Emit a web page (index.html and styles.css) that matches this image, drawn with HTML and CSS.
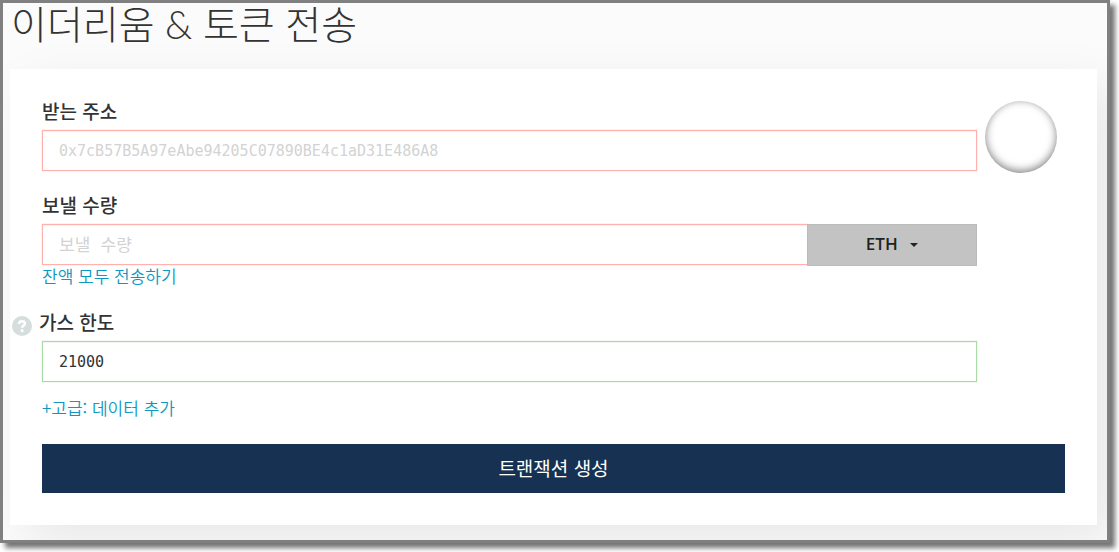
FILE: index.html
```html
<!DOCTYPE html>
<html lang="ko">
<head>
    <meta charset="UTF-8">
    <meta name="viewport" content="width=device-width, initial-scale=1.0">
    <title>이더리움 &amp; 토큰 전송</title>
    <link rel="stylesheet" href="styles.css">
</head>
<body>
<main class="page">
    <h1>이더리움 &amp; 토큰 전송</h1>
    <form class="block">
        <div class="send-grid">
            <div class="fields">
                <div class="form-group">
                    <label for="address">받는 주소</label>
                    <input type="text" id="address" class="form-control is-invalid" placeholder="0x7cB57B5A97eAbe94205C07890BE4c1aD31E486A8">
                </div>
                <div class="form-group">
                    <label for="amount">보낼 수량</label>
                    <div class="input-group">
                        <input type="text" id="amount" class="form-control is-invalid" placeholder="보낼 수량">
                        <button type="button" class="btn-unit">ETH <span class="caret"></span></button>
                    </div>
                    <a href="#" class="link">잔액 모두 전송하기</a>
                </div>
                <div class="form-group">
                    <div class="label-row">
                        <a href="#" class="help" aria-label="도움말">
                            <svg width="20" height="20" viewBox="0 0 20 20">
                                <circle cx="10" cy="10" r="10" fill="#d5dddd"/>
                                <path d="M7 7.9C7.1 6 8.3 5.2 10 5.2c1.7 0 2.9.9 2.9 2.4 0 2-2.8 1.9-2.8 4.2" fill="none" stroke="#fff" stroke-width="2.6"/>
                                <circle cx="10.1" cy="14.7" r="1.6" fill="#fff"/>
                            </svg>
                        </a>
                        <label for="gas">가스 한도</label>
                    </div>
                    <input type="text" id="gas" class="form-control is-valid" value="21000">
                </div>
                <a href="#" class="link">+고급: 데이터 추가</a>
            </div>
            <div class="identicon"></div>
        </div>
        <button type="submit" class="btn-primary">트랜잭션 생성</button>
    </form>
</main>
</body>
</html>
```
FILE: styles.css
```css
* {
    box-sizing: border-box;
}

body {
    margin: 0;
    padding: 0 9px 9px 0;
    background-color: #fff;
    font-family: "Noto Sans CJK KR", "Open Sans", sans-serif;
    font-size: 17px;
    line-height: 20px;
    color: #333;
}

.page {
    border: 3px solid #808080;
    background-color: #fbfbfb;
    box-shadow: 5px 5px 5px rgba(0, 0, 0, 0.55);
    padding: 0 10px 15px 7px;
    overflow: hidden;
}

h1 {
    margin: 0 0 24px 1px;
    font-family: Lato, "Noto Sans CJK KR", sans-serif;
    font-size: 39px;
    line-height: 42px;
    font-weight: 300;
}

.block {
    padding: 32px;
    background-color: #fff;
    box-shadow: 16px 16px 47px rgba(0, 0, 0, 0.08);
}

.send-grid {
    display: grid;
    grid-template-columns: 1fr 80px;
    gap: 8px;
}

.form-group {
    margin-bottom: 24px;
}

label {
    display: block;
    margin-bottom: 10px;
    font-size: 19px;
    line-height: 19px;
    font-weight: 500;
}

.form-control {
    display: block;
    width: 100%;
    height: 41px;
    padding: 0 16px;
    border: 1px solid #ccc;
    border-radius: 0;
    background-color: #fff;
    box-shadow: inset 0 1px 1px rgba(0, 0, 0, 0.08);
    font-family: "DejaVu Sans Mono", "Noto Sans CJK KR", monospace;
    font-size: 15px;
    color: #333;
}

.form-control::placeholder {
    color: #d3d3d3;
    opacity: 1;
}

.is-invalid {
    border-color: #ffb2ad;
    box-shadow: inset 0 1px 1px rgba(0, 0, 0, 0.05), 0 0 1px #ffb2ad;
}

.is-valid {
    border-color: #a9dba5;
    box-shadow: inset 0 1px 1px rgba(0, 0, 0, 0.05), 0 0 1px #a9dba5;
}

.input-group {
    display: flex;
}

#amount {
    border-right: 0;
    font-size: 17px;
}

.btn-unit {
    flex: 0 0 170px;
    height: 42px;
    padding-bottom: 4px;
    border: 1px solid #bbb;
    background-color: #c3c3c3;
    font-family: "Open Sans", sans-serif;
    font-size: 17px;
    font-weight: 600;
    color: #222;
}

.caret {
    display: inline-block;
    margin-left: 8px;
    border-top: 4px solid #222;
    border-left: 4px solid transparent;
    border-right: 4px solid transparent;
    vertical-align: middle;
}

.link {
    display: block;
    color: #0e97c0;
    text-decoration: none;
    font-weight: 350;
}

.label-row {
    display: flex;
    gap: 7px;
    margin-left: -30px;
    padding-top: 2px;
}

.help {
    height: 20px;
    padding-top: 4px;
}

.fields > .link {
    margin: -8px 0 26px;
}

.identicon {
    width: 72px;
    height: 72px;
    border-radius: 50%;
    box-shadow: inset 0 -2px 8px rgba(0, 0, 0, 0.5);
}

.btn-primary {
    display: block;
    width: 100%;
    height: 49px;
    padding-bottom: 4px;
    border: 0;
    background-color: #163151;
    font-family: inherit;
    font-size: 19px;
    color: #fff;
}
```
